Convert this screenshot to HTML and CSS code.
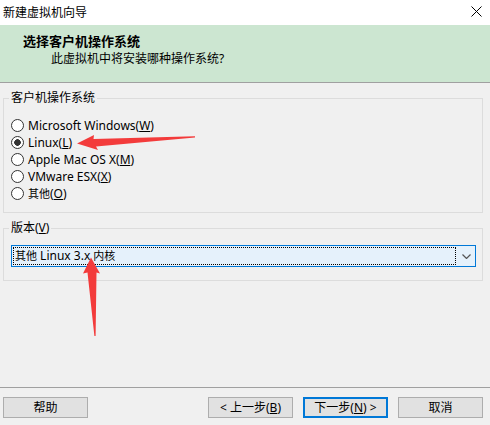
FILE: index.html
```html
<!DOCTYPE html>
<html lang="zh-CN">
<head>
    <meta charset="UTF-8">
    <title>新建虚拟机向导</title>
    <link rel="stylesheet" href="styles.css">
</head>
<body>
    <div class="window">
        <div class="titlebar">
            <span class="titlebar-text">新建虚拟机向导</span>
            <svg class="close" width="11" height="11" viewBox="0 0 11 11">
                <path d="M0.5 0.5 L10.5 10.5 M10.5 0.5 L0.5 10.5" stroke="#000" stroke-width="1" fill="none"/>
            </svg>
        </div>

        <div class="header">
            <div class="header-title">选择客户机操作系统</div>
            <div class="header-sub">此虚拟机中将安装哪种操作系统?</div>
        </div>

        <div class="main">
            <fieldset class="group group-os">
                <legend>客户机操作系统</legend>
                <label class="radio"><input type="radio" name="os">Microsoft Windows(<u>W</u>)</label>
                <label class="radio"><input type="radio" name="os" checked>Linux(<u>L</u>)</label>
                <label class="radio"><input type="radio" name="os">Apple Mac OS X(<u>M</u>)</label>
                <label class="radio"><input type="radio" name="os">VMware ESX(<u>X</u>)</label>
                <label class="radio"><input type="radio" name="os"><span class="cjk">其他</span>(<u>O</u>)</label>
            </fieldset>

            <fieldset class="group group-ver">
                <legend>版本(<u>V</u>)</legend>
                <div class="combo">
                    <div class="combo-focus"><span class="cjk">其他</span> Linux 3.x <span class="cjk">内核</span></div>
                    <svg class="combo-arrow" width="9" height="5" viewBox="0 0 9 5">
                        <path d="M0.5 0.5 L4.5 4.5 L8.5 0.5" stroke="#555" stroke-width="1.2" fill="none"/>
                    </svg>
                </div>
            </fieldset>
        </div>

        <div class="footer">
            <button class="btn">帮助</button>
            <button class="btn btn-back">&lt; 上一步(<u>B</u>)</button>
            <button class="btn btn-default">下一步(<u>N</u>) &gt;</button>
            <button class="btn">取消</button>
        </div>

        <!-- red annotation arrows drawn over the dialog -->
        <svg class="annot" width="490" height="425" viewBox="0 0 490 425">
            <polygon points="77,143.5 94,135 93.5,139 195,136.2 195,137.6 96,146.5 98,150" fill="#f33b3b"/>
            <polygon points="91,257.5 100,273.5 96.5,272.5 95.6,336 94.4,336 87.5,272.5 83,273.5" fill="#f33b3b"/>
        </svg>
    </div>
</body>
</html>
```

FILE: styles.css
```css
* {
    box-sizing: border-box;
}

body {
    margin: 0;
    background-color: #f0f0f0;
    font-family: "Noto Sans", "Noto Sans CJK SC", sans-serif;
    font-size: 12px;
    color: #000;
}

.window {
    position: relative;
    display: flex;
    flex-direction: column;
    width: 490px;
    height: 425px;
    overflow: hidden;
}

.titlebar {
    display: flex;
    align-items: center;
    justify-content: space-between;
    height: 25px;
    padding: 0 8px 0 3px;
    background-color: #fff;
    line-height: 16px;
}

.close {
    display: block;
    margin-top: -3px;
}

.header {
    height: 58px;
    padding-top: 8px;
    background-color: #cce6d1;
    border-bottom: 1px solid #a0a0a0;
}

.header-title {
    padding-left: 23px;
    font-size: 13px;
    font-weight: bold;
    line-height: 17px;
}

.header-sub {
    padding-left: 51px;
    line-height: 17px;
}

.main {
    flex: 1;
    padding-top: 7px;
}

.group {
    margin: 0 7px 0 3px;
    padding: 0 6px 0 7px;
    border: 1px solid #dcdcdc;
    min-width: 0;
}

.group legend {
    margin-left: -2px;
    padding: 0 2px;
    line-height: 16px;
}

.group-os {
    padding-top: 11px;
    padding-bottom: 10px;
}

.group-ver {
    margin-top: 7px;
    padding-top: 9px;
    padding-bottom: 13px;
}

/* chinese inside latin runs renders a little smaller in the original */
.cjk {
    font-size: 11px;
}

.radio {
    display: flex;
    align-items: center;
    height: 17px;
    line-height: 17px;
    white-space: nowrap;
}

.radio input {
    appearance: none;
    -webkit-appearance: none;
    width: 13px;
    height: 13px;
    margin: 0 4px 0 0;
    border: 1px solid #333;
    border-radius: 50%;
    background-color: #fff;
}

.radio input:checked {
    background: radial-gradient(circle, #333 0, #333 3px, #fff 3.6px);
}

.combo {
    display: flex;
    align-items: center;
    height: 22px;
    padding: 1px;
    border: 1px solid #0078d7;
    background-color: #e5f1fb;
}

.combo-focus {
    width: 443px;
    height: 18px;
    padding-left: 1px;
    border: 1px dotted #000;
    line-height: 16px;
    color: #000;
}

.combo-arrow {
    display: block;
    margin-left: 6px;
}

.footer {
    display: flex;
    gap: 10px;
    height: 38px;
    padding: 9px 7px 0 3px;
    border-top: 1px solid #a0a0a0;
}

.btn {
    width: 85px;
    height: 21px;
    padding: 0;
    border: 1px solid #adadad;
    background-color: #e1e1e1;
    font-family: "Noto Sans", "Noto Sans CJK SC", sans-serif;
    font-size: 12px;
    line-height: 17px;
    color: #000;
}

.btn-back {
    margin-left: auto;
}

.btn-default {
    border: 2px solid #0078d7;
}

.annot {
    position: absolute;
    top: 0;
    left: 0;
    pointer-events: none;
}
```
